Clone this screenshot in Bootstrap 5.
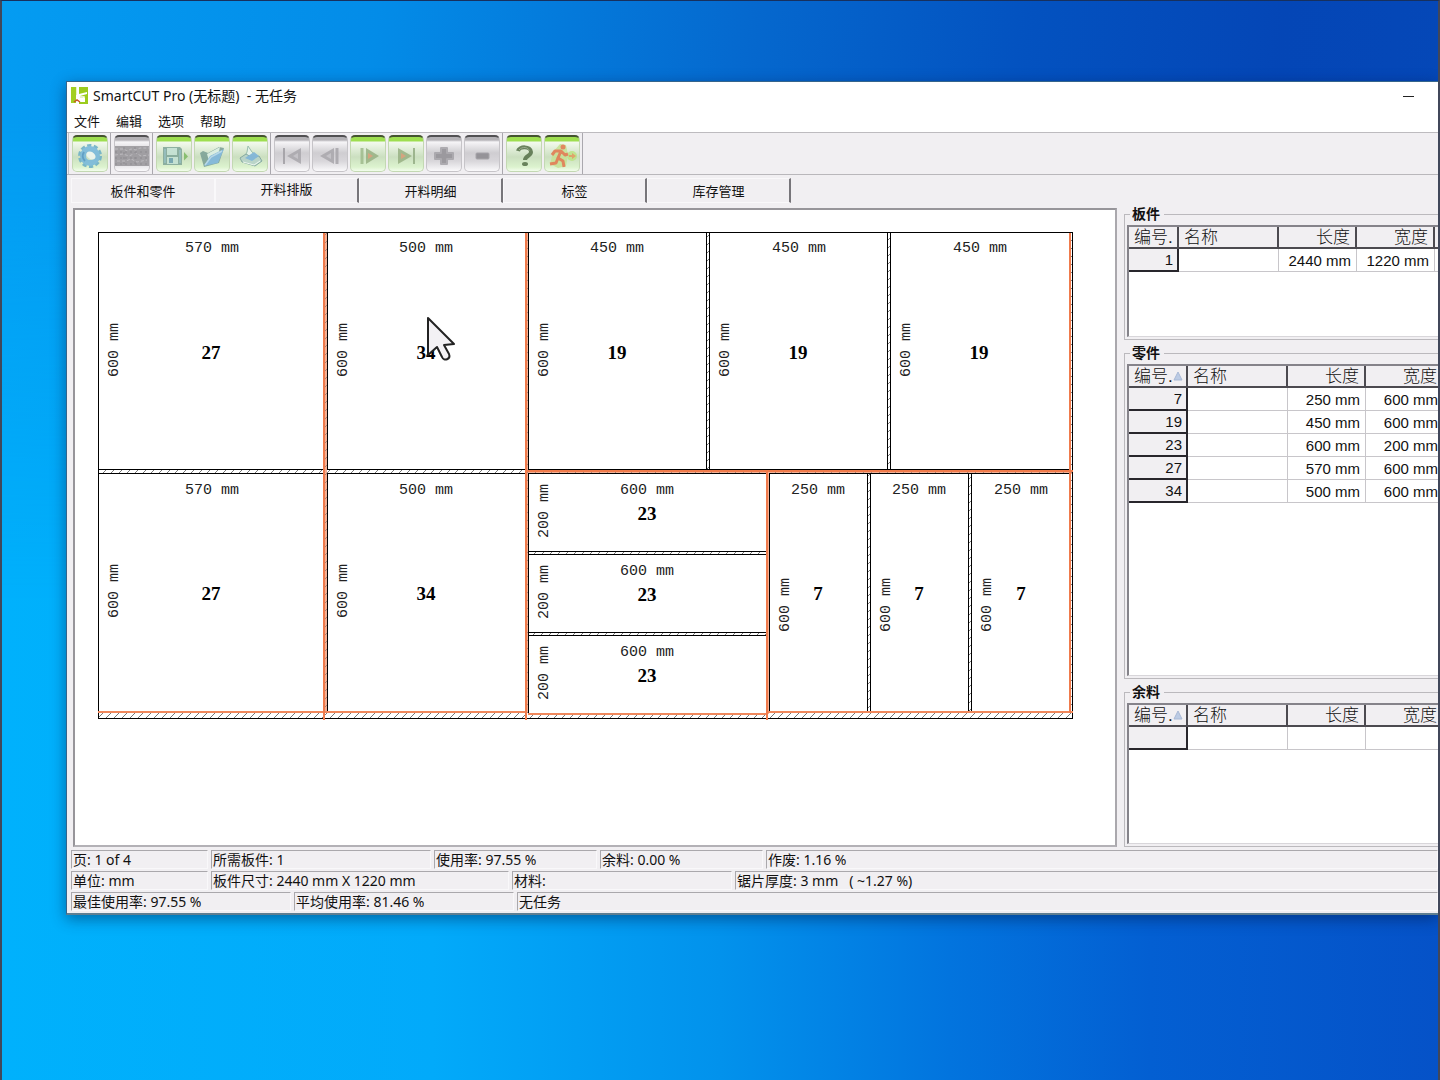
<!DOCTYPE html>
<html lang="zh-CN">
<head>
<meta charset="utf-8">
<meta name="viewport" content="width=device-width, initial-scale=1">
<title>SmartCUT Pro</title>
<link href="https://cdn.jsdelivr.net/npm/bootstrap@5.3.0/dist/css/bootstrap.min.css" rel="stylesheet">
<script src="https://cdn.jsdelivr.net/npm/bootstrap@5.3.0/dist/js/bootstrap.bundle.min.js"></script>
<style>
  body { font-family: "Noto Sans", "Noto Sans CJK SC", sans-serif; font-size: 13px; line-height: 18px; color: #111; }
  .desktop {
    min-height: 100vh; border: 2px solid #41475a; border-top: 1px solid #17305e; border-bottom: 0;
    padding: 80px 0 40px 64px; isolation: isolate;
    background: linear-gradient(90deg, #00b1fc 0%, #02aafa 30%, #0292ec 50%, #0274de 66%, #035fd2 80%, #0552c8 100%) padding-box;
  }
  .desktop::before {
    content: ""; position: absolute; inset: 0 0 auto; height: 600px; z-index: -1;
    background: linear-gradient(97deg, #049cf2 0%, #038ce8 25%, #0568ce 50%, #0352c0 68%, #0446b6 85%, #0548b8 100%);
    -webkit-mask-image: linear-gradient(#000 20%, transparent); mask-image: linear-gradient(#000 20%, transparent);
  }
  .app-window { background: #f1eff2; border: 1px solid #35658c; border-right: 0; border-bottom: 2px solid #5f7f92; box-shadow: 0 4px 14px rgba(0, 20, 60, .45); }
  .title-bar { height: 27px; padding: 0 22px 0 4px; font-size: 14px; }
  .title-bar button { width: 14px; height: 20px; }
  .menu-bar { height: 24px; padding: 0 7px; border-bottom: 1px solid #bdbbbf; gap: 16px; }
  .menu-bar a { color: #111; text-decoration: none; }
  .tool-bar { height: 42px; border-bottom: 1px solid #b9b7bb; padding: 0 1px; }
  .tool-group { gap: 2px; padding: 2px 2px 0 3px; border-right: 1px solid #aaa8ae; }
  .tool-group:first-child { border-left: 1px solid #c4c2c6; padding-left: 3px; }
  .tool-btn { width: 36px; height: 37px; padding: 4px 0 0; border: 1px solid #c3d8b2; border-top: 2px solid #44542f; border-radius: 5px; background: linear-gradient(#9ede50 0 4px, #f3faee 5px, #cbdfc0 20px, #dcf3ce 30px, #f2fdec); }
  .tool-btn.is-off { border-color: #c6c4c8; border-top-color: #515052; background: linear-gradient(#b4b2b6 0 3px, #f6f5f7 5px, #cfcdd1 16px, #d8d6da 24px, #faf9fb); }
  .tool-btn svg { display: block; margin: auto; opacity: .85; }
  .tab-strip { height: 30px; padding: 3px 4px; }
  .tab-strip button { width: 144px; height: 25px; padding: 0; color: #111; background: none; border: 1px solid #f9f8fa; border-right: 2px solid #77757a; }
  .tab-strip button:first-child { border-right: 1px solid #f9f8fa; }
  .tab-strip button.active { padding-bottom: 4px; }
  .work-area { gap: 7px; padding: 3px 0 3px 6px; }
  .sheet-view { background: #fff; border: 2px solid #97959a; border-right-color: #aaa8ad; border-bottom-color: #b3b1b6; padding: 20px 40px 20px 20px; }
  .sheet-view svg { display: block; width: 100%; }
  .side-view { width: 314px; padding-top: 6px; }
  .grid-box { margin: 0 0 13px; padding: 0 0 2px 2px; border: 1px solid #bbb9bd; border-right: 0; min-width: 0; }
  .grid-box:last-child { margin: 0; }
  .grid-box h2 { font-size: 14px; line-height: 16px; font-weight: 700; margin: -9px 0 3px 3px; padding: 0 2px; width: 34px; background: #f1eff2; white-space: nowrap; }
  .grid-pane { background: #fff; border: 2px solid #85838a; border-right: 0; border-bottom: 1px solid #d8d6da; overflow: hidden; }
  .pane-a { height: 112px; } .pane-b { height: 312px; } .pane-c { height: 141px; }
  .parts-grid { table-layout: fixed; border-collapse: separate; border-spacing: 0; font-family: "Liberation Sans", "Noto Sans CJK SC", sans-serif; font-size: 15px; line-height: 20px; }
  .parts-grid th, .parts-grid td { height: 23px; padding: 1px 5px 0 4px; border-right: 1px solid #c8c6ca; border-bottom: 1px solid #c8c6ca; white-space: nowrap; text-align: right; overflow: hidden; }
  .parts-grid thead th { height: 22px; line-height: 19px; background: #f1eff2; border-right: 2px solid #4c4a50; border-bottom: 2px solid #4c4a50; font-size: 17px; font-weight: 300; padding: 0 5px; }
  .parts-grid tbody th { background: #f1eff2; border-right: 2px solid #28262c; border-bottom: 2px solid #28262c; font-weight: 400; padding: 0 4px; }
  .parts-grid .to-left { text-align: left; }
  .status-line { gap: 3px; padding: 0 0 2px 4px; font-size: 14px; }
  .status-line span { height: 19px; border: 1px solid #aaa8ac; border-right-color: #f9f8fa; border-bottom-color: #f9f8fa; padding: 0 1px; line-height: 18px; white-space: pre; }
  .w-137 { width: 137px; } .w-163 { width: 163px; } .w-220 { width: 220px; } .w-298 { width: 298px; }
  .dims { font: 15px "Liberation Mono", monospace; fill: #222; text-anchor: middle; }
  .nums { font: bold 19px "Liberation Serif", serif; fill: #000; text-anchor: middle; }
</style>
</head>
<body>
<div class="desktop position-relative overflow-hidden">
<main class="app-window">
  <header class="title-bar d-flex align-items-center bg-white">
    <svg width="18" height="18" viewBox="0 0 18 18" class="me-1" aria-hidden="true">
      <path d="M0 0h6v8H5v8H0z" fill="#a3cf22"/><path d="M8 0h9v17H8v-2h6v-4H9V9l7-2V5L8 7z" fill="#9ccc1e"/><path d="M6 0v9l2-1M5 10h8v4H7" fill="none" stroke="#fff" stroke-width="1.500"/><path d="M3 15l3-2 3 2" fill="none" stroke="#c8552a" stroke-width="1.500"/>
    </svg>
    <span class="flex-grow-1" style="white-space:pre">SmartCUT Pro (无标题)  - 无任务</span>
    <button type="button" class="border-0 bg-transparent p-0" aria-label="最小化"><svg width="12" height="12" viewBox="0 0 12 12" class="d-block"><path d="M1 6.5h11" stroke="#222"/></svg></button>
  </header>
  <nav class="menu-bar d-flex align-items-center bg-white">
    <a href="#">文件</a><a href="#">编辑</a><a href="#">选项</a><a href="#">帮助</a>
  </nav>
  <div class="tool-bar d-flex" role="toolbar" aria-label="工具栏">
    <div class="tool-group d-flex">
      <button class="tool-btn" type="button" aria-label="优化"><svg width="26" height="28" viewBox="0 0 26 28"><circle cx="13" cy="14" r="10" fill="none" stroke="#6aaec6" stroke-width="4" stroke-dasharray="4 2.3"/><circle cx="13" cy="14" r="7" fill="none" stroke="#74b6dc" stroke-width="6"/><path d="M8 19a7 7 0 0 1-1-9" fill="none" stroke="#4f94c4" stroke-width="2"/><ellipse cx="14" cy="13.500" rx="5" ry="3.500" transform="rotate(35 14 13.500)" fill="#f0f7f2"/></svg></button>
    </div>
    <div class="tool-group d-flex">
      <button class="tool-btn is-off" type="button" aria-label="停止"><svg width="34" height="28" viewBox="0 0 34 28"><path d="M0 4h34v20H0z" fill="#98969a"/><path d="M0 7h9l3 2 4-2 5 1 4-2h9M0 13l8-1 6 2 7-3 5 3 8-1M2 19h9l5-2 6 3 10-2" fill="none" stroke="#b9b7bb" stroke-dasharray="3 2"/><path d="M0 10h34M0 16h34M0 22h34M9 5v19M20 5v19" stroke="#807e83" stroke-dasharray="2 3"/></svg></button>
    </div>
    <div class="tool-group d-flex">
      <button class="tool-btn" type="button" aria-label="保存"><svg width="30" height="28" viewBox="0 0 30 28"><path d="M4 5h17l2 2v16H4z" fill="#7fa598"/><path d="M8 6h10v7H8zM8 15h11v7H8z" fill="#c2e0d4"/><path d="M6 7v14M21 8v13" stroke="#8fbcc4" stroke-width="1.500"/><path d="M10 16h4v5h-4z" fill="#6a9eae"/><path d="M25 10l4 4.500-4 4z" fill="#7cb962"/></svg></button>
      <button class="tool-btn" type="button" aria-label="打开"><svg width="30" height="28" viewBox="0 0 30 28"><path d="M3 11l3-2 5 2 11-6 5 1-5 15-15 4z" fill="#7a9f94"/><path d="M10 12l13-7-2 9-9 5z" fill="#dcefe4"/><path d="M7 24l6-10 14-7-6 14z" fill="#79b2dc"/><path d="M8 23l6-8 11-6" fill="none" stroke="#b4d6ec" stroke-width="1.500"/></svg></button>
      <button class="tool-btn" type="button" aria-label="打印"><svg width="30" height="28" viewBox="0 0 30 28"><path d="M13 4l4 6 6 5-5 3-8-4 2-4z" fill="#e8f5ee" stroke="#8cb5a4"/><path d="M5 16l6-4 7 4 6-2 3 5-7 5-13-4z" fill="#b6d2c9" stroke="#789f9a"/><path d="M10 16l9-6 5 4-7 5z" fill="#79b1da"/><path d="M8 20l11 3 6-4" fill="none" stroke="#f3faf6"/></svg></button>
    </div>
    <div class="tool-group d-flex">
      <button class="tool-btn is-off" type="button" aria-label="首页"><svg width="30" height="28" viewBox="0 0 30 28"><path d="M7 6v16" stroke="#a09ea3" stroke-width="2"/><path d="M24 6v16l-14-8z" fill="#a9a7ac"/><path d="M21 11v6l-5-3z" fill="#c2c0c5"/></svg></button>
      <button class="tool-btn is-off" type="button" aria-label="上一页"><svg width="30" height="28" viewBox="0 0 30 28"><path d="M22 6v16" stroke="#a7a5aa" stroke-width="3"/><path d="M19 6v16L5 14z" fill="#a9a7ac"/><path d="M16 11v6l-5-3z" fill="#c2c0c5"/></svg></button>
      <button class="tool-btn" type="button" aria-label="下一页"><svg width="30" height="28" viewBox="0 0 30 28"><path d="M9 6v16" stroke="#9fbb8c" stroke-width="3"/><path d="M13 6v16l13-8z" fill="#98b183"/><path d="M15 11v6l5-3z" fill="#d79a74"/></svg></button>
      <button class="tool-btn" type="button" aria-label="末页"><svg width="30" height="28" viewBox="0 0 30 28"><path d="M23 6v16" stroke="#94ad84" stroke-width="2"/><path d="M7 6v16l14-8z" fill="#98b183"/><path d="M10 11v6l5-3z" fill="#d79a74"/></svg></button>
      <button class="tool-btn is-off" type="button" aria-label="增加"><svg width="30" height="28" viewBox="0 0 30 28"><path d="M12 6h6v5h6v6h-6v5h-6v-5H6v-6h6z" fill="#929095" stroke="#a5a3a8" stroke-width="2" stroke-linejoin="round"/></svg></button>
      <button class="tool-btn is-off" type="button" aria-label="减少"><svg width="30" height="28" viewBox="0 0 30 28"><rect x="9" y="11" width="13" height="6" rx="1" fill="#8b898e" stroke="#a09ea3"/></svg></button>
    </div>
    <div class="tool-group d-flex">
      <button class="tool-btn" type="button" aria-label="帮助"><svg width="30" height="28" viewBox="0 0 30 28"><path d="M9 9c1-5 13-5 13 1 0 4-6 4-6 8" fill="none" stroke="#557048" stroke-width="4"/><path d="M10 8c3-4 10-3 10 1" fill="none" stroke="#8da080"/><ellipse cx="16" cy="22" rx="3" ry="2" fill="#557048"/></svg></button>
      <button class="tool-btn" type="button" aria-label="退出"><svg width="32" height="28" viewBox="0 0 32 28"><circle cx="26" cy="14" r="5" fill="#bce486"/><path d="M14 2l6 1 2 10-2 11-8 2-8-4 3-12z" fill="#c6e296"/><circle cx="17" cy="5" r="2.500" fill="#e2764b"/><path d="M15 9l-3 7 5 3 1 6M12 16l-2 5-6 1M6 13l3-4 6 0 4 4 3-1" fill="none" stroke="#e2764b" stroke-width="3" stroke-linejoin="round"/><path d="M23 13h3v-2l4 3-4 3v-2h-3z" fill="#e29a5c"/></svg></button>
    </div>
  </div>
  <div class="tab-strip d-flex" role="tablist">
    <button type="button" role="tab">板件和零件</button>
    <button type="button" role="tab" class="active" aria-selected="true">开料排版</button>
    <button type="button" role="tab">开料明细</button>
    <button type="button" role="tab">标签</button>
    <button type="button" role="tab">库存管理</button>
  </div>
  <div class="work-area d-flex">
    <section class="sheet-view flex-grow-1">
      <svg viewBox="95 230 980 492" role="img" aria-label="开料排版图">
        <defs>
          <pattern id="hatch" width="8" height="8" patternUnits="userSpaceOnUse"><path d="M-1 9L9-1M-1 1l2-2M7 9l2-2" stroke="#555" stroke-width=".8"/></pattern>
        </defs>
        <path d="M98 713h975v6H98zM98 470h428v4H98zM528 552h239v3H528zM528 633h239v3H528zM706 233h4v237h-4zM887 233h4v237h-4zM1070 233h3v486h-3zM867 473h4v240h-4zM968 473h4v240h-4z" fill="url(#hatch)"/>
        <g fill="#f3b095"><path d="M324 233h3v480h-3zM525 233h3v480h-3zM528 470h545v4H528zM767 474h2v240h-2z"/></g>
        <path d="M324 233h3v480h-3zM525 233h3v480h-3zM528 471h545v3H528z" fill="url(#hatch)" opacity=".6"/>
        <g fill="none" stroke="#000" shape-rendering="crispEdges">
          <path d="M98.500 232.500h974v486h-974z"/>
          <path d="M98 469.500h226M327 469.500h198M528 469.500h541M98 473.500h226M327 473.500h198M528 473.500h239M769 473.500h301"/>
          <path d="M327.500 233v237M327.500 473v239M528.500 233v237M528.500 473v241M706.500 233v237M709.500 233v237M887.500 233v237M890.500 233v237"/>
          <path d="M528 551.500h238M528 554.500h238M528 632.500h238M528 635.500h238M769.500 473v239M867.500 473v239M870.500 473v239M968.500 473v239M971.500 473v239"/>
        </g>
        <path d="M98 711h428v2H98zM768 711h305v2H768zM528 713h239v2H528z" fill="#f0885c"/>
        <path d="M324 233v487M526 233v487M767 472v248M1070 233v480M526 471h547" fill="none" stroke="#f07b4c" stroke-width="2" shape-rendering="crispEdges"/>
        <g class="dims">
          <text x="212" y="252">570 mm</text><text x="426" y="252">500 mm</text><text x="617" y="252">450 mm</text><text x="799" y="252">450 mm</text><text x="980" y="252">450 mm</text>
          <text x="212" y="494">570 mm</text><text x="426" y="494">500 mm</text><text x="647" y="494">600 mm</text><text x="647" y="575">600 mm</text><text x="647" y="656">600 mm</text>
          <text x="818" y="494">250 mm</text><text x="919" y="494">250 mm</text><text x="1021" y="494">250 mm</text>
          <text transform="translate(118 350) rotate(-90)">600 mm</text><text transform="translate(347 350) rotate(-90)">600 mm</text><text transform="translate(548 350) rotate(-90)">600 mm</text><text transform="translate(729 350) rotate(-90)">600 mm</text><text transform="translate(910 350) rotate(-90)">600 mm</text>
          <text transform="translate(118 591) rotate(-90)">600 mm</text><text transform="translate(347 591) rotate(-90)">600 mm</text>
          <text transform="translate(548 511) rotate(-90)">200 mm</text><text transform="translate(548 592) rotate(-90)">200 mm</text><text transform="translate(548 673) rotate(-90)">200 mm</text>
          <text transform="translate(789 605) rotate(-90)">600 mm</text><text transform="translate(890 605) rotate(-90)">600 mm</text><text transform="translate(991 605) rotate(-90)">600 mm</text>
        </g>
        <g class="nums">
          <text x="211" y="359">27</text><text x="426" y="359">34</text><text x="617" y="359">19</text><text x="798" y="359">19</text><text x="979" y="359">19</text>
          <text x="211" y="600">27</text><text x="426" y="600">34</text><text x="647" y="520">23</text><text x="647" y="601">23</text><text x="647" y="682">23</text>
          <text x="818" y="600">7</text><text x="919" y="600">7</text><text x="1021" y="600">7</text>
        </g>
        <path d="M428 318v37l9-8 5 10c2 5 9 2 7-3L444 345l10-1z" fill="#f3f1f4" stroke="#222" stroke-width="2" stroke-linejoin="round"/>
      </svg>
    </section>
    <aside class="side-view flex-shrink-0">
      <section class="grid-box">
        <h2>板件</h2>
        <div class="grid-pane pane-a">
          <table class="parts-grid" style="width:384px">
            <colgroup><col style="width:50px"><col style="width:100px"><col style="width:78px"><col style="width:78px"><col style="width:78px"></colgroup>
            <thead><tr><th class="to-left">编号.</th><th class="to-left">名称</th><th>长度</th><th>宽度</th><th></th></tr></thead>
            <tbody><tr><th>1</th><td></td><td>2440 mm</td><td>1220 mm</td><td></td></tr></tbody>
          </table>
        </div>
      </section>
      <section class="grid-box">
        <h2>零件</h2>
        <div class="grid-pane pane-b">
          <table class="parts-grid" style="width:315px">
            <colgroup><col style="width:59px"><col style="width:100px"><col style="width:78px"><col style="width:78px"></colgroup>
            <thead><tr><th class="to-left">编号.<svg width="10" height="12" viewBox="0 0 10 12"><path d="M5 1l4 8H1z" fill="#bccbe4" stroke="#a9b9d6"/></svg></th><th class="to-left">名称</th><th>长度</th><th>宽度</th></tr></thead>
            <tbody>
              <tr><th>7</th><td></td><td>250 mm</td><td>600 mm</td></tr>
              <tr><th>19</th><td></td><td>450 mm</td><td>600 mm</td></tr>
              <tr><th>23</th><td></td><td>600 mm</td><td>200 mm</td></tr>
              <tr><th>27</th><td></td><td>570 mm</td><td>600 mm</td></tr>
              <tr><th>34</th><td></td><td>500 mm</td><td>600 mm</td></tr>
            </tbody>
          </table>
        </div>
      </section>
      <section class="grid-box">
        <h2>余料</h2>
        <div class="grid-pane pane-c">
          <table class="parts-grid" style="width:315px">
            <colgroup><col style="width:59px"><col style="width:100px"><col style="width:78px"><col style="width:78px"></colgroup>
            <thead><tr><th class="to-left">编号.<svg width="10" height="12" viewBox="0 0 10 12"><path d="M5 1l4 8H1z" fill="#bccbe4" stroke="#a9b9d6"/></svg></th><th class="to-left">名称</th><th>长度</th><th>宽度</th></tr></thead>
            <tbody><tr><th></th><td></td><td></td><td></td></tr></tbody>
          </table>
        </div>
      </section>
    </aside>
  </div>
  <footer>
    <div class="status-line d-flex"><span class="w-137">页: 1 of 4</span><span class="w-220">所需板件: 1</span><span class="w-163">使用率: 97.55 %</span><span class="w-163">余料: 0.00 %</span><span class="flex-grow-1">作废: 1.16 %</span></div>
    <div class="status-line d-flex"><span class="w-137">单位: mm</span><span class="w-298">板件尺寸: 2440 mm X 1220 mm</span><span class="w-220">材料:</span><span class="flex-grow-1">锯片厚度: 3 mm   ( ~1.27 %)</span></div>
    <div class="status-line d-flex"><span class="w-220">最佳使用率: 97.55 %</span><span class="w-220">平均使用率: 81.46 %</span><span class="flex-grow-1">无任务</span></div>
  </footer>
</main>
</div>
</body>
</html>
